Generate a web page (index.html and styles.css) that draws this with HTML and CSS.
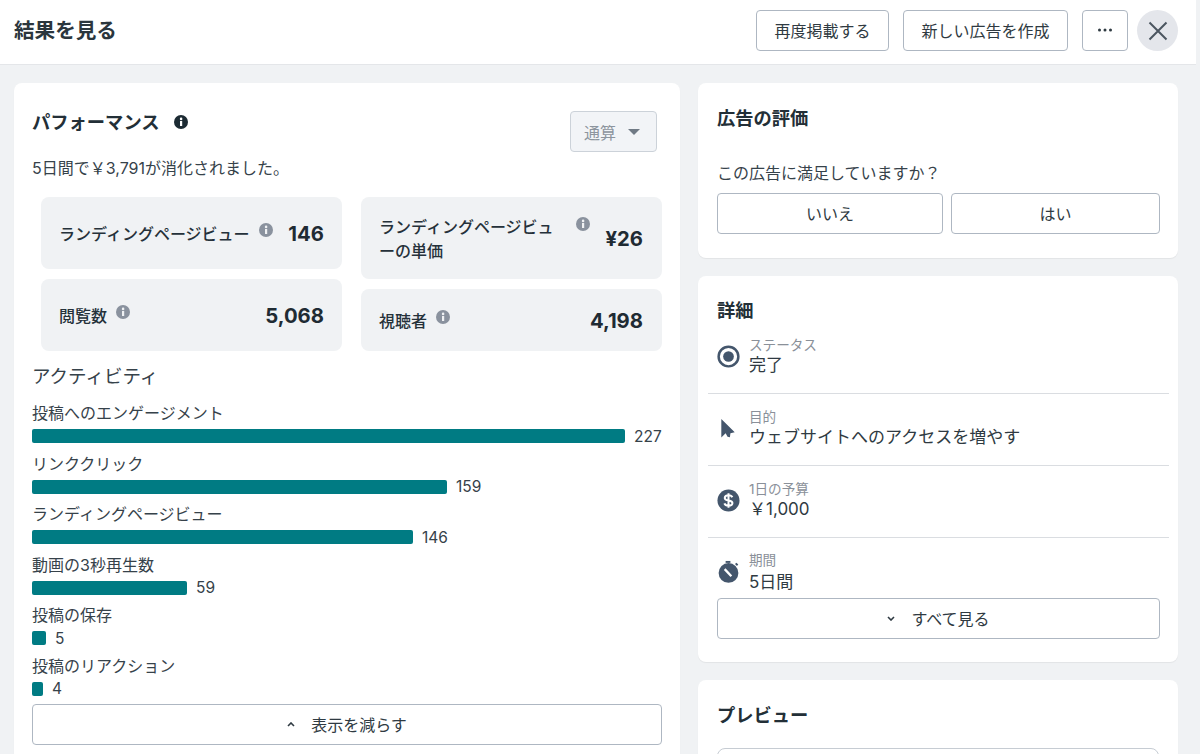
FILE: index.html
```html
<!DOCTYPE html>
<html lang="ja">
<head>
<meta charset="utf-8">
<title>結果を見る</title>
<link rel="stylesheet" href="styles.css">
</head>
<body>
<div class="page">
  <header class="topbar">
    <h1 class="page-title">結果を見る</h1>
    <div class="actions">
      <button class="btn btn-top btn-a">再度掲載する</button>
      <button class="btn btn-top btn-b">新しい広告を作成</button>
      <button class="btn btn-top btn-more"><svg width="16" height="4" viewBox="0 0 16 4"><circle cx="2.5" cy="2" r="1.5"/><circle cx="8" cy="2" r="1.5"/><circle cx="13.5" cy="2" r="1.5"/></svg></button>
      <button class="close"><svg width="20" height="20" viewBox="0 0 20 20"><path d="M1.500 1.500l17 17M18.500 1.500l-17 17"/></svg></button>
    </div>
  </header>
  <main class="content">
    <section class="card perf">
      <div class="perf-head">
        <div class="perf-title-row">
          <h2 class="card-title">パフォーマンス</h2>
          <svg class="info info-dark" viewBox="0 0 14 14"><circle cx="7" cy="7" r="7"/><rect x="6" y="6" width="2.2" height="5" fill="#fff"/><circle cx="7.1" cy="3.9" r="1.3" fill="#fff"/></svg>
        </div>
        <div class="select">通算<span class="caret"></span></div>
      </div>
      <p class="spent">5日間で￥3,791が消化されました。</p>
      <div class="stats">
        <div class="stat-col">
          <div class="stat stat-72">
            <span class="stat-label">ランディングページビュー</span>
            <svg class="info info-grey" viewBox="0 0 14 14"><circle cx="7" cy="7" r="7"/><rect x="6" y="6" width="2.2" height="5" fill="#f0f2f4"/><circle cx="7.1" cy="3.9" r="1.3" fill="#f0f2f4"/></svg>
            <span class="stat-value">146</span>
          </div>
          <div class="stat stat-72">
            <span class="stat-label">閲覧数</span>
            <svg class="info info-grey" viewBox="0 0 14 14"><circle cx="7" cy="7" r="7"/><rect x="6" y="6" width="2.2" height="5" fill="#f0f2f4"/><circle cx="7.1" cy="3.9" r="1.3" fill="#f0f2f4"/></svg>
            <span class="stat-value">5,068</span>
          </div>
        </div>
        <div class="stat-col stat-col-right">
          <div class="stat stat-82">
            <span class="stat-label stat-label-wrap">ランディングページビューの単価</span>
            <svg class="info info-grey info-high" viewBox="0 0 14 14"><circle cx="7" cy="7" r="7"/><rect x="6" y="6" width="2.2" height="5" fill="#f0f2f4"/><circle cx="7.1" cy="3.9" r="1.3" fill="#f0f2f4"/></svg>
            <span class="stat-value">¥26</span>
          </div>
          <div class="stat stat-62">
            <span class="stat-label">視聴者</span>
            <svg class="info info-grey" viewBox="0 0 14 14"><circle cx="7" cy="7" r="7"/><rect x="6" y="6" width="2.2" height="5" fill="#f0f2f4"/><circle cx="7.1" cy="3.9" r="1.3" fill="#f0f2f4"/></svg>
            <span class="stat-value">4,198</span>
          </div>
        </div>
      </div>
      <h3 class="activity-title">アクティビティ</h3>
      <ul class="bars">
        <li class="bar-row"><span class="bar-label">投稿へのエンゲージメント</span><div class="bar-line"><i class="bar" style="width:593px"></i><span class="bar-val">227</span></div></li>
        <li class="bar-row"><span class="bar-label">リンククリック</span><div class="bar-line"><i class="bar" style="width:415px"></i><span class="bar-val">159</span></div></li>
        <li class="bar-row"><span class="bar-label">ランディングページビュー</span><div class="bar-line"><i class="bar" style="width:381px"></i><span class="bar-val">146</span></div></li>
        <li class="bar-row"><span class="bar-label">動画の3秒再生数</span><div class="bar-line"><i class="bar" style="width:155px"></i><span class="bar-val">59</span></div></li>
        <li class="bar-row"><span class="bar-label">投稿の保存</span><div class="bar-line"><i class="bar" style="width:14px"></i><span class="bar-val">5</span></div></li>
        <li class="bar-row"><span class="bar-label">投稿のリアクション</span><div class="bar-line"><i class="bar" style="width:11px"></i><span class="bar-val">4</span></div></li>
      </ul>
      <button class="btn btn-wide btn-less"><svg class="chev" width="8" height="5" viewBox="0 0 8 5"><path d="M1 4l3-3 3 3"/></svg>表示を減らす</button>
    </section>
    <aside class="side">
      <section class="card rate">
        <h2 class="card-title">広告の評価</h2>
        <p class="rate-q">この広告に満足していますか？</p>
        <div class="rate-btns">
          <button class="btn btn-wide btn-no">いいえ</button>
          <button class="btn btn-wide btn-yes">はい</button>
        </div>
      </section>
      <section class="card detail">
        <h2 class="card-title">詳細</h2>
        <div class="rows">
          <div class="row">
            <svg class="row-icon" viewBox="0 0 24 24"><circle cx="12" cy="12" r="10.300" fill="none" stroke="#44566c" stroke-width="2.600"/><circle cx="12" cy="12" r="5.600" fill="#44566c"/></svg>
            <div class="row-text"><span class="row-key">ステータス</span><span class="row-val">完了</span></div>
          </div>
          <div class="row">
            <svg class="row-icon" viewBox="0 0 24 24"><path d="M4.500 2L18.500 16l-4.500 1-.5 4-2.500-.5L9 17l-4.500 4.500z" fill="#44566c"/></svg>
            <div class="row-text"><span class="row-key">目的</span><span class="row-val">ウェブサイトへのアクセスを増やす</span></div>
          </div>
          <div class="row">
            <svg class="row-icon" viewBox="0 0 24 24"><circle cx="12" cy="12" r="11.500" fill="#44566c"/><path d="M16 8.600c-.6-1.400-2.200-2.100-4-2.100-2.200 0-3.900 1-3.900 2.800 0 3.800 8 1.800 8 5.400 0 1.800-1.800 2.800-4.100 2.800-2 0-3.700-.8-4.300-2.400M12 4.500v15" fill="none" stroke="#fff" stroke-width="2.100"/></svg>
            <div class="row-text"><span class="row-key">1日の予算</span><span class="row-val">￥1,000</span></div>
          </div>
          <div class="row">
            <svg class="row-icon" viewBox="0 0 24 24"><circle cx="12" cy="13.500" r="10.300" fill="#44566c"/><rect x="9" y="1" width="5" height="2" fill="#44566c"/><path d="M19.500 3.500l2 2" stroke="#44566c" stroke-width="2"/><path d="M8 9.500l7 7.500" stroke="#fff" stroke-width="2.400"/></svg>
            <div class="row-text"><span class="row-key">期間</span><span class="row-val">5日間</span></div>
          </div>
        </div>
        <button class="btn btn-wide btn-all"><svg class="chev" width="8" height="5" viewBox="0 0 8 5"><path d="M1 1l3 3 3-3"/></svg>すべて見る</button>
      </section>
      <section class="card preview">
        <h2 class="card-title">プレビュー</h2>
        <div class="preview-box"></div>
      </section>
    </aside>
  </main>
</div>
</body>
</html>
```
FILE: styles.css
```css
* { box-sizing: border-box; }
html, body { margin: 0; height: 100%; overflow: hidden; }
body {
  font-family: Inter, "Noto Sans CJK JP", "Noto Sans", sans-serif;
  color: #1c2b33;
  background: #f0f2f4;
}
.page { width: 1196px; height: 754px; overflow: hidden; background: #f0f2f4; }
h1, h2, h3, p, ul { margin: 0; padding: 0; }
ul { list-style: none; }
button { font-family: inherit; }

.topbar {
  height: 65px;
  background: #fff;
  border-bottom: 1px solid #e4e6e9;
  display: flex;
  align-items: center;
  justify-content: space-between;
  padding: 0 18px 3px 14px;
}
.page-title { font-size: 20.600px; line-height: 28px; font-weight: 700; color: #2b363d; }
.actions { display: flex; align-items: center; }

.btn {
  background: #fff;
  border: 1px solid #aeb7c2;
  border-radius: 4px;
  color: #2f3a42;
  font-size: 16px;
  padding: 0 0 2px;
  display: flex;
  align-items: center;
  justify-content: center;
}
.btn-top { height: 41px; }
.btn-a { width: 133px; margin-right: 14px; }
.btn-b { width: 165px; margin-right: 14px; }
.btn-more { width: 46px; margin-right: 9px; fill: #2f3a42; }
.close {
  width: 41px; height: 41px; border: 0; border-radius: 50%;
  background: #e4e6eb; display: flex; align-items: center; justify-content: center; padding: 0;
}
.close path { stroke: #4b5560; stroke-width: 2; fill: none; }

.content {
  display: flex;
  align-items: flex-start;
  gap: 18px;
  padding: 18px 18px 0 14px;
}
.card {
  background: #fff;
  border-radius: 8px;
  box-shadow: 0 1px 1px rgba(0, 0, 0, .06);
}
.card-title { font-size: 18.300px; line-height: 24px; font-weight: 700; color: #232f37; }

.perf { width: 666px; height: 700px; padding: 27px 18px 0; flex: none; }
.perf-head { display: flex; justify-content: space-between; align-items: flex-start; height: 41px; }
.perf-title-row { display: flex; align-items: center; gap: 14px; }
.info { width: 14px; height: 14px; flex: none; }
.info-dark { fill: #1c2b33; }
.info-grey { fill: #8a929e; margin-top: -8px; margin-left: 9px; }
.info-high { align-self: flex-start; margin-top: 19px; margin-left: 17px; }
.select {
  width: 87px; height: 41px; margin: 1px 5px 0 0;
  background: #f2f4f7; border: 1px solid #ccd2d9; border-radius: 4px;
  display: flex; align-items: center; justify-content: space-between;
  padding: 0 16px 0 13px; color: #8d959e; font-size: 16px;
}
.caret { width: 0; height: 0; border-left: 6px solid transparent; border-right: 6px solid transparent; border-top: 6px solid #707a85; }
.spent { margin-top: 6px; font-size: 16px; line-height: 22px; color: #36424a; }

.stats { display: flex; gap: 19px; margin: 18px 0 0 9px; }
.stat-col { width: 301px; display: flex; flex-direction: column; gap: 10px; }
.stat {
  background: #f0f2f4; border-radius: 8px;
  display: flex; align-items: center; padding: 1px 18px 0;
}
.stat-col-right .stat { padding-right: 19px; }
.stat-72 { height: 72px; }
.stat-82 { height: 82px; }
.stat-62 { height: 62px; }
.stat-label { font-size: 16px; line-height: 24px; font-weight: 500; color: #25313a; white-space: nowrap; }
.stat-label-wrap { width: 180px; white-space: normal; }
.stat-value { margin-left: auto; font-size: 20.300px; font-weight: 700; color: #1f2b33; }

.activity-title { margin-top: 12px; font-size: 18.500px; line-height: 26px; font-weight: 400; color: #36424a; }
.bars { margin-top: 12px; }
.bar-row { height: 50.500px; }
.bar-row:last-child { height: 43.500px; }
.bar-label { display: block; height: 24px; font-size: 16px; line-height: 24px; color: #36424a; white-space: nowrap; }
.bar-line { display: flex; align-items: center; height: 20px; margin-top: 1px; }
.bar { display: block; height: 14px; background: #007b83; border-radius: 2px; flex: none; }
.bar-val { margin-left: 9px; font-size: 15.500px; color: #36424a; }

.btn-wide { height: 41px; }
.btn-less { width: 630px; margin-top: 7px; }
.chev { margin: 2px 16px 0 0; fill: none; stroke: #2f3a42; stroke-width: 1.600; }

.side { width: 480px; flex: none; display: flex; flex-direction: column; gap: 18px; }
.rate { height: 175px; padding: 23px 18px 23px 19px; }
.rate-q { margin-top: 32px; font-size: 16px; line-height: 22px; color: #36424a; }
.rate-btns { display: flex; gap: 8px; margin-top: 9px; }
.btn-no { width: 226px; }
.btn-yes { width: 209px; }

.detail { height: 386px; padding: 22px 18px 0 19px; }
.rows { margin: 0 -9px 0 -9px; }
.row {
  height: 72px; display: flex; align-items: center; gap: 9px; padding: 0 0 3px 9px;
  border-bottom: 1px solid #dadde1;
}
.row:last-child { border-bottom: 0; height: 60px; align-items: flex-start; padding: 14px 0 0 9px; }
.row:last-child .row-icon { margin-top: 8px; }
.row:last-child .row-val { margin-top: 2px; }
.row-icon { width: 23px; height: 23px; flex: none; }
.row-text { display: flex; flex-direction: column; }
.row-key { font-size: 13.600px; line-height: 17px; color: #8a9099; }
.row-val { font-size: 17px; line-height: 22px; color: #2f3a42; }
.btn-all { width: 443px; }
.preview { height: 200px; padding: 23px 19px; }
.preview-box { margin-top: 21px; height: 60px; border: 1px solid #c6ccd3; border-radius: 8px; }
```
